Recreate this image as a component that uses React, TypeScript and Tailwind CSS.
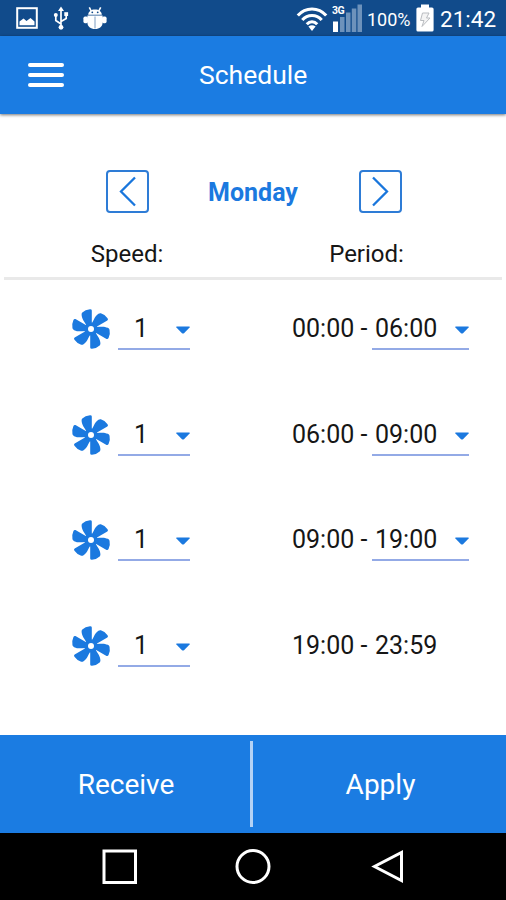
import React from "react";

const BLADES = [0, 60, 120, 180, 240, 300];

const ROWS = [
  { speed: "1", from: "00:00", to: "06:00", editable: true },
  { speed: "1", from: "06:00", to: "09:00", editable: true },
  { speed: "1", from: "09:00", to: "19:00", editable: true },
  { speed: "1", from: "19:00", to: "23:59", editable: false },
];

function FanIcon() {
  return (
    <svg viewBox="-20 -20 40 40" className="h-10 w-10 shrink-0" fill="#1b79df">
      {BLADES.map((a) => (
        <path
          key={a}
          transform={`rotate(${a})`}
          d="M0.8 -3.5 V-18.4 Q0.8 -19.8 -1 -19.7 Q-5.8 -19.2 -8.7 -16.4 Q-9.6 -15.4 -9.4 -14 C-9 -11.2 -8.4 -9.6 -6.6 -7 L-3.6 -2 Z"
        />
      ))}
      <circle r="6.6" />
      <circle r="3" fill="#fff" />
    </svg>
  );
}

function Caret() {
  return (
    <svg viewBox="0 0 14 8" className="h-2 w-3.5 shrink-0" fill="#1b79df">
      <path d="M0.4 0.6 H13.6 V1.5 L8 7.2 Q7 8 6 7.2 L0.4 1.5 Z" />
    </svg>
  );
}

function StatusBar() {
  return (
    <div className="flex h-9 shrink-0 items-center bg-[#114b8b] text-white">
      <svg viewBox="0 0 22 22" className="ml-4 h-[22px] w-[22px]" fill="none">
        <rect x="1.2" y="1.2" width="19.6" height="19.6" stroke="#fff" strokeWidth="2" />
        <path d="M3.5 18.3 V14.5 L7.5 11.5 L10.5 14 L14.5 11 L18.5 14.5 V18.3 Z" fill="#fff" />
      </svg>
      <svg viewBox="0 0 16 24" className="ml-[15px] h-6 w-4" fill="none" stroke="#fff" strokeWidth="1.7">
        <path d="M8 3 V21 M8 18 L2.8 14.5 V9.5 M8 15.5 L13.2 12.5 V8" />
        <path d="M8 0.5 L11 5 H5 Z" fill="#fff" stroke="none" />
        <circle cx="8" cy="21.3" r="2.4" fill="#fff" stroke="none" />
        <circle cx="2.8" cy="9" r="2" fill="#fff" stroke="none" />
        <rect x="11.3" y="6.2" width="3.8" height="3.8" fill="#fff" stroke="none" />
      </svg>
      <svg viewBox="0 0 24 24" className="ml-3.5 h-6 w-6" fill="#fff">
        <path d="M5.2 8.8 C5.4 5.6 8 3.6 12 3.6 S18.6 5.6 18.8 8.8 Z" />
        <path d="M8.2 5 L6.3 1.4 M15.8 5 L17.7 1.4" stroke="#fff" strokeWidth="1.6" />
        <circle cx="9.3" cy="6.3" r="0.9" fill="#114b8b" />
        <circle cx="14.7" cy="6.3" r="0.9" fill="#114b8b" />
        <path d="M4.4 9.6 H19.6 V16.5 C19.6 20.6 16.5 23 12 23 S4.4 20.6 4.4 16.5 Z" />
        <path d="M12 10.5 V22.4" stroke="#7d9cc0" strokeWidth="1" />
        <rect x="0.4" y="10.6" width="4.6" height="6.6" rx="1.6" />
        <rect x="19" y="10.6" width="4.6" height="6.6" rx="1.6" />
      </svg>
      <svg viewBox="0 0 32 26" className="ml-[189px] h-[26px] w-8" fill="none" stroke="#fff" strokeWidth="3.1">
        <path d="M1.8 10.5 C9.5 1.8 22.5 1.8 30.2 10.5" />
        <path d="M6.3 15 C11.5 9 20.5 9 25.7 15" />
        <path d="M10.8 19.2 C13.8 16 18.2 16 21.2 19.2" />
        <path d="M16 26 L12.4 21.6 Q16 18.8 19.6 21.6 Z" fill="#fff" stroke="none" />
      </svg>
      <div className="relative ml-1 h-7 w-[31px]">
        <svg viewBox="0 0 31 28" className="h-7 w-[31px]" fill="#6d92bb">
          <rect x="1" y="17.5" width="5" height="10.5" fill="#fff" />
          <rect x="8" y="13" width="4.5" height="15" />
          <rect x="14" y="8.5" width="4.5" height="19.5" />
          <rect x="19.8" y="4.5" width="4.5" height="23.5" />
          <rect x="25.5" y="0.5" width="4.5" height="27.5" />
        </svg>
        <span className="absolute left-0 top-px text-[10.5px] font-bold leading-[11px] tracking-[-0.5px]">3G</span>
      </div>
      <span className="ml-1 w-[46px] whitespace-nowrap pt-[3px] text-[18px] leading-none">100%</span>
      <svg viewBox="0 0 18 28" className="ml-[3px] h-7 w-[18px]">
        <path d="M5 0.5 H13 V3.5 H16 Q17.6 3.5 17.6 5 V26 Q17.6 27.6 16 27.6 H2 Q0.4 27.6 0.4 26 V5 Q0.4 3.5 2 3.5 H5 Z" fill="#fff" />
        <path d="M6.5 9 H13 L10.5 14 H14 L6 22.5 L8 16.5 H4.5 Z" fill="#f4f4f4" stroke="#b9bcc0" strokeWidth="1" />
      </svg>
      <span className="ml-[6px] whitespace-nowrap pt-[2px] text-[22.5px] leading-none">21:42</span>
    </div>
  );
}

function ArrowButton({ d, label }: { d: string; label: string }) {
  return (
    <button aria-label={label} className="flex h-[43px] w-[43px] items-center justify-center rounded-[4px] border-2 border-[#2e7cd6]">
      <svg viewBox="0 0 39 39" className="h-[39px] w-[39px]" fill="none" stroke="#1976dc" strokeWidth="2.3">
        <path d={d} />
      </svg>
    </button>
  );
}

export default function App() {
  return (
    <div className="flex h-[900px] w-[506px] flex-col overflow-hidden bg-white font-[Roboto,sans-serif] text-[25px] text-[#161616]">
      <StatusBar />
      <header className="z-10 flex h-[78px] shrink-0 items-center bg-[#1b7ce2] text-white shadow-[0_1px_3px_rgba(0,0,0,0.55)]">
        <div className="ml-7 flex w-9 flex-col gap-[5.5px]">
          <span className="h-[4.5px] rounded-[2px] bg-white" />
          <span className="h-[4.5px] rounded-[2px] bg-white" />
          <span className="h-[4.5px] rounded-[2px] bg-white" />
        </div>
        <h1 className="ml-[135px] text-[26.5px] leading-none">Schedule</h1>
      </header>

      <main className="flex min-h-0 flex-1 flex-col">
        <div className="mt-14 flex h-[43px] shrink-0 items-center pl-[105.5px] pr-[104.5px]">
          <ArrowButton label="Previous day" d="M27 5.5 L13 19.5 L27 33.5" />
          <span className="flex-1 pr-px pt-px text-center text-[25px] font-bold leading-none text-[#1b79df]">Monday</span>
          <ArrowButton label="Next day" d="M12 5.5 L26 19.5 L12 33.5" />
        </div>
        <div className="mt-[26px] grid h-[30px] shrink-0 grid-cols-[254px_225px] items-center text-center text-[24px] leading-none">
          <span>Speed:</span>
          <span>Period:</span>
        </div>
        <div className="mx-1 mt-2 h-[3px] shrink-0 bg-[#e9e9e9]" />
        <div className="mt-6 flex flex-col gap-[55.5px]">
          {ROWS.map((r) => (
            <div key={r.from} className="flex h-[50px] pl-[71px] leading-none">
              <div className="flex items-center">
                <FanIcon />
              </div>
              <div className="ml-[7px] flex h-[46px] w-[72px] items-center border-b-2 border-[#93aae6] pl-4 pt-[5px]">
                <span className="w-[42px]">{r.speed}</span>
                <span className="pt-[3px]">
                  <Caret />
                </span>
              </div>
              <div className="ml-[102px] flex h-[46px] w-20 items-center whitespace-nowrap border-b-2 border-transparent pt-[5px]">
                {r.from} -
              </div>
              {r.editable ? (
                <div className="flex h-[46px] w-[97px] items-center justify-between border-b-2 border-[#93aae6] pl-[3px] pt-[5px]">
                  <span>{r.to}</span>
                  <span className="pt-[3px]">
                    <Caret />
                  </span>
                </div>
              ) : (
                <div className="flex h-[46px] items-center border-b-2 border-transparent pl-[3px] pt-[5px]">{r.to}</div>
              )}
            </div>
          ))}
        </div>
      </main>

      <footer className="flex h-[98px] shrink-0 items-center bg-[#1b7ce2] text-[28px] leading-none text-white">
        <button className="w-[250px] pl-0.5 pt-px">Receive</button>
        <span className="h-[86px] w-[3px] bg-[#b4d2f5]" />
        <button className="flex-1 pl-0.5 pt-px">Apply</button>
      </footer>
      <nav className="flex h-[67px] shrink-0 items-center bg-black pb-0.5 pl-[101px]">
        <svg viewBox="0 0 304 36" className="h-9 w-[304px]" fill="none" stroke="#fff" strokeWidth="3">
          <rect x="3" y="3" width="31.5" height="31.5" />
          <circle cx="152" cy="18.5" r="16" />
          <path d="M300.5 4.5 V32.5 L273.5 18.5 Z" />
        </svg>
      </nav>
    </div>
  );
}
